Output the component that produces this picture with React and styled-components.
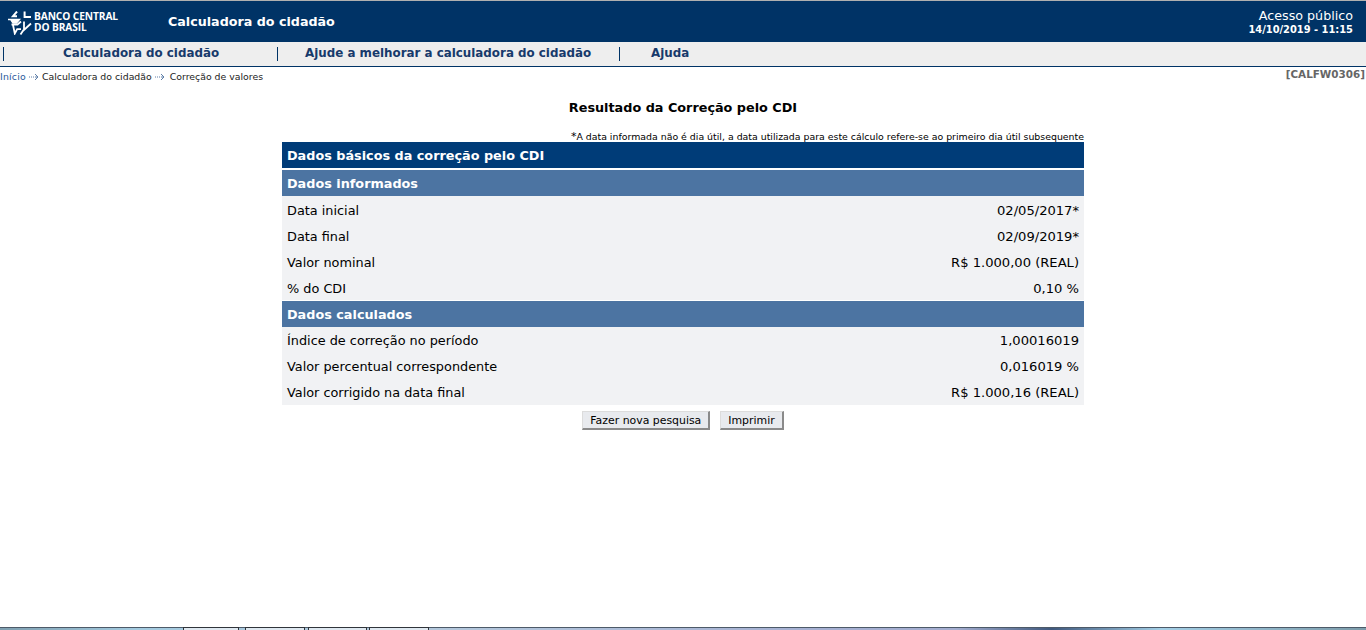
import React from 'react';
import styled, { createGlobalStyle } from 'styled-components';

const GlobalStyle = createGlobalStyle`
  html, body {
    margin: 0;
    padding: 0;
    background: #fff;
    overflow: hidden;
  }
  body {
    font-family: "DejaVu Sans", Verdana, sans-serif;
    color: #000;
  }
`;

const informados = [
  ['Data inicial', '02/05/2017*'],
  ['Data final', '02/09/2019*'],
  ['Valor nominal', 'R$ 1.000,00 (REAL)'],
  ['% do CDI', '0,10 %'],
];

const calculados = [
  ['Índice de correção no período', '1,00016019'],
  ['Valor percentual correspondente', '0,016019 %'],
  ['Valor corrigido na data final', 'R$ 1.000,16 (REAL)'],
];

const Logo = () => (
  <LogoBox>
    <svg width="25" height="24" viewBox="0 0 25 24" fill="none" stroke="#fff" strokeWidth="2">
      <path d="M9 0.5L5 5.2h4" />
      <path d="M16.6 0.5v5.6h6.4" />
      <path d="M0 8.5h11.5L8.5 12H5L3 9" fill="#fff" strokeWidth="1.4" />
      <path d="M3.5 13.5h6L13 10.5M5 14l1.8 8.5 2.4-4.4H13" strokeWidth="1.8" />
      <path d="M16 10.5v8.5l7-6.5M15.5 19l-3 4.5" strokeWidth="1.8" />
    </svg>
    <LogoText>
      BANCO CENTRAL
      <br />
      DO BRASIL
    </LogoText>
  </LogoBox>
);

const Arrow = () => (
  <ArrowIcon width="11" height="8" viewBox="0 0 11 8" fill="none" stroke="#5f7fa8" strokeWidth="1">
    <path d="M0 4h1M2 4h1M4 4h1M6 4h2M6 1l3 3-3 3" />
  </ArrowIcon>
);

const App = () => {
  return (
    <Page>
      <GlobalStyle />
      <Header>
        <Logo />
        <AppTitle>Calculadora do cidadão</AppTitle>
        <UserInfo>
          <Access>Acesso público</Access>
          <Stamp>14/10/2019 - 11:15</Stamp>
        </UserInfo>
      </Header>
      <Nav>
        <NavItem $width={274}>Calculadora do cidadão</NavItem>
        <NavItem $width={342} $pad={27}>Ajude a melhorar a calculadora do cidadão</NavItem>
        <NavItem $width={200} $pad={31}>Ajuda</NavItem>
      </Nav>
      <Crumbs>
        <CrumbLink>Início</CrumbLink>
        <Arrow />
        <span>Calculadora do cidadão</span>
        <Arrow />
        <CrumbLast>Correção de valores</CrumbLast>
        <ScreenCode>[CALFW0306]</ScreenCode>
      </Crumbs>
      <Main>
        <Title>Resultado da Correção pelo CDI</Title>
        <Note><Star>*</Star>A data informada não é dia útil, a data utilizada para este cálculo refere-se ao primeiro dia útil subsequente</Note>
        <Table>
          <MainHead>Dados básicos da correção pelo CDI</MainHead>
          <SubHead>Dados informados</SubHead>
          {informados.map(([label, value]) => (
            <Row key={label} $line={30}>
              <Label>{label}</Label>
              <Value>{value}</Value>
            </Row>
          ))}
          <SubHead $top={1}>Dados calculados</SubHead>
          {calculados.map(([label, value]) => (
            <Row key={label} $line={28}>
              <Label>{label}</Label>
              <Value>{value}</Value>
            </Row>
          ))}
        </Table>
        <Buttons>
          <Button>Fazer nova pesquisa</Button>
          <Button>Imprimir</Button>
        </Buttons>
      </Main>
      <Taskbar>
        <TaskTab $left={183} $width={56} />
        <TaskTab $left={245} $width={60} />
        <TaskTab $left={308} $width={59} />
        <TaskTab $left={369} $width={60} />
      </Taskbar>
    </Page>
  );
};

export default App;

const Page = styled.div`
  position: relative;
  display: flex;
  flex-direction: column;
  height: 630px;
  overflow: hidden;
`;

const Header = styled.header`
  display: flex;
  align-items: center;
  height: 41px;
  margin-top: 1px;
  padding: 0 13px 0 8px;
  background: #003366;
  box-shadow: 0 -1px 0 #b0b0b0;
  color: #fff;
`;

const LogoBox = styled.div`
  display: flex;
  align-items: center;
  gap: 1px;
  width: 160px;
  padding-top: 2px;
`;

const LogoText = styled.div`
  font-family: "Open Sans", sans-serif;
  font-size: 10.2px;
  font-weight: 700;
  line-height: 11px;
  letter-spacing: -0.1px;
  margin-top: -1px;
`;

const AppTitle = styled.div`
  flex: 1;
  font-size: 12.7px;
  font-weight: 700;
`;

const UserInfo = styled.div`
  text-align: right;
`;

const Access = styled.div`
  font-size: 12.7px;
  line-height: 16px;
`;

const Stamp = styled.div`
  font-size: 9.9px;
  font-weight: 700;
  line-height: 12px;
`;

const Nav = styled.nav`
  display: flex;
  align-items: center;
  height: 24px;
  padding-left: 3px;
  background: #eeeeee;
  border-bottom: 1px solid #003366;
`;

const NavItem = styled.div`
  width: ${(p) => p.$width}px;
  height: 14px;
  padding-left: ${(p) => p.$pad || 0}px;
  box-sizing: border-box;
  border-left: 1px solid #003366;
  color: #173a6b;
  font-size: 11.88px;
  font-weight: 700;
  line-height: 12px;
  text-indent: ${(p) => (p.$pad ? 0 : 59)}px;
  white-space: nowrap;
`;

const Crumbs = styled.div`
  display: flex;
  align-items: center;
  height: 18px;
  padding-top: 1px;
  box-sizing: border-box;
  font-size: 9.35px;
  color: #222;
  white-space: nowrap;
`;

const CrumbLink = styled.span`
  color: #2a5a9a;
  letter-spacing: 0.2px;
`;

const ArrowIcon = styled.svg`
  margin: 0 2px 0 3px;
`;

const CrumbLast = styled.span`
  margin-left: 2px;
`;

const ScreenCode = styled.span`
  margin: -5px 1px 0 auto;
  color: #666;
  font-size: 10.4px;
  font-weight: 700;
`;

const Main = styled.main`
  display: flex;
  flex-direction: column;
  width: 802px;
  margin: 1px auto 0;
`;

const Title = styled.h1`
  margin: 13px 0 0;
  font-size: 12.8px;
  font-weight: 700;
  line-height: 18px;
  text-align: center;
`;

const Note = styled.div`
  margin-top: 14px;
  font-size: 9.4px;
  line-height: 11px;
  text-align: right;
  white-space: nowrap;
`;

const Star = styled.span`
  font-size: 11px;
`;

const Table = styled.section`
  display: flex;
  flex-direction: column;
`;

const MainHead = styled.div`
  height: 26px;
  padding-left: 5px;
  background: #003c78;
  color: #fff;
  font-size: 12.8px;
  font-weight: 700;
  line-height: 28px;
`;

const SubHead = styled.div`
  height: 26px;
  margin-top: ${(p) => (p.$top === 1 ? 1 : 2)}px;
  padding-left: 5px;
  background: #4c74a2;
  color: #fff;
  font-size: 12.8px;
  font-weight: 700;
  line-height: 28px;
`;

const Row = styled.div`
  display: flex;
  justify-content: space-between;
  height: 26px;
  padding: 0 5px;
  background: #f1f2f4;
  line-height: ${(p) => p.$line}px;
`;

const Label = styled.span`
  font-size: 12.85px;
`;

const Value = styled.span`
  font-size: 13.1px;
`;

const Buttons = styled.div`
  display: flex;
  justify-content: center;
  gap: 10px;
  margin-top: 6px;
`;

const Button = styled.button`
  height: 19px;
  padding: 0 7px;
  box-sizing: border-box;
  background: #e8eaee;
  border: none;
  border-top: 1px solid #dcdcdc;
  border-left: 1px solid #dcdcdc;
  border-right: 2px solid #8a8a8a;
  border-bottom: 2px solid #8a8a8a;
  color: #000;
  font-family: "DejaVu Sans", sans-serif;
  font-size: 10.9px;
  line-height: 15px;
`;

const Taskbar = styled.div`
  position: absolute;
  left: 0;
  right: 0;
  bottom: 0;
  height: 3px;
  border-top: 1px solid #4d5a68;
  box-sizing: border-box;
  background: linear-gradient(90deg, #7f9fb0 0, #a4cbe0 10%, #b4c8dc 32%, #a6b0d2 60%, #a5aed0 70%, #40597e 77%, #a4cfe6 85%, #7d9caa 100%);
`;

const TaskTab = styled.div`
  position: absolute;
  top: -1px;
  left: ${(p) => p.$left}px;
  width: ${(p) => p.$width}px;
  height: 3px;
  box-sizing: border-box;
  border: 1px solid #30343a;
  border-bottom: none;
  background: #dfe8f0;
`;
